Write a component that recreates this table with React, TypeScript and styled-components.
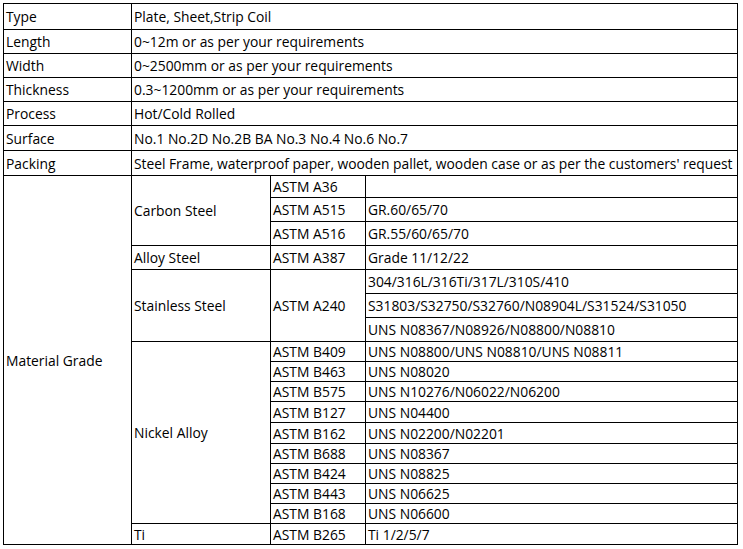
import React from "react";
import styled, { createGlobalStyle } from "styled-components";

const Global = createGlobalStyle`
  html, body { margin: 0; padding: 0; background: #fff; }
  body { font-family: "Open Sans", "Liberation Sans", sans-serif; color: #000; }
`;

const Page = styled.div`
  padding: 3px 0 0 3px;
`;

const Table = styled.table`
  border-collapse: collapse;
  table-layout: fixed;
  width: 734px;
  font-family: "Open Sans", "Liberation Sans", sans-serif;
  font-size: 13.85px;
  color: #000;
`;

const Row = styled.tr<{ $h: number }>`
  height: ${(p) => p.$h}px;
`;

const Cell = styled.td<{ $tight?: boolean }>`
  border: 1px solid #000;
  padding: 1px 0 0 2px;
  vertical-align: middle;
  white-space: nowrap;
  overflow: hidden;
  line-height: 1;
  letter-spacing: ${(p) => (p.$tight ? "-0.03px" : "0")};
`;

const spec: [string, string, number][] = [
  ["Type", "Plate, Sheet,Strip Coil", 26],
  ["Length", "0~12m or as per your requirements", 24],
  ["Width", "0~2500mm or as per your requirements", 24],
  ["Thickness", "0.3~1200mm or as per your requirements", 24],
  ["Process", "Hot/Cold Rolled", 24],
  ["Surface", "No.1 No.2D No.2B BA No.3 No.4 No.6 No.7", 25],
  ["Packing", "Steel Frame, waterproof paper, wooden pallet, wooden case or as per the customers' request", 25],
];

type G = { group?: string; span?: number; std?: string; stdSpan?: number; grade: string; h: number };

const grades: G[] = [
  { group: "Carbon Steel", span: 3, std: "ASTM A36", grade: "", h: 22 },
  { std: "ASTM A515", grade: "GR.60/65/70", h: 24 },
  { std: "ASTM A516", grade: "GR.55/60/65/70", h: 24 },
  { group: "Alloy Steel", span: 1, std: "ASTM A387", grade: "Grade 11/12/22", h: 24 },
  { group: "Stainless Steel", span: 3, std: "ASTM A240", stdSpan: 3, grade: "304/316L/316Ti/317L/310S/410", h: 24 },
  { grade: "S31803/S32750/S32760/N08904L/S31524/S31050", h: 24 },
  { grade: "UNS N08367/N08926/N08800/N08810", h: 24 },
  { group: "Nickel Alloy", span: 9, std: "ASTM B409", grade: "UNS N08800/UNS N08810/UNS N08811", h: 20 },
  { std: "ASTM B463", grade: "UNS N08020", h: 20 },
  { std: "ASTM B575", grade: "UNS N10276/N06022/N06200", h: 20 },
  { std: "ASTM B127", grade: "UNS N04400", h: 21 },
  { std: "ASTM B162", grade: "UNS N02200/N02201", h: 21 },
  { std: "ASTM B688", grade: "UNS N08367", h: 20 },
  { std: "ASTM B424", grade: "UNS N08825", h: 20 },
  { std: "ASTM B443", grade: "UNS N06625", h: 20 },
  { std: "ASTM B168", grade: "UNS N06600", h: 20 },
  { group: "Ti", span: 1, std: "ASTM B265", grade: "Ti 1/2/5/7", h: 21 },
];

export default function App() {
  return (
    <Page>
      <Global />
      <Table>
        <colgroup>
          <col style={{ width: 128 }} />
          <col style={{ width: 139 }} />
          <col style={{ width: 95 }} />
          <col style={{ width: 372 }} />
        </colgroup>
        <tbody>
          {spec.map(([k, v, h]) => (
            <Row key={k} $h={h}>
              <Cell>{k}</Cell>
              <Cell colSpan={3} $tight={k === "Packing"}>{v}</Cell>
            </Row>
          ))}
          {grades.map((g, i) => (
            <Row key={i} $h={g.h}>
              {i === 0 && <Cell rowSpan={grades.length}>Material Grade</Cell>}
              {g.group && <Cell rowSpan={g.span}>{g.group}</Cell>}
              {g.std && <Cell rowSpan={g.stdSpan ?? 1}>{g.std}</Cell>}
              <Cell>{g.grade}</Cell>
            </Row>
          ))}
        </tbody>
      </Table>
    </Page>
  );
}
